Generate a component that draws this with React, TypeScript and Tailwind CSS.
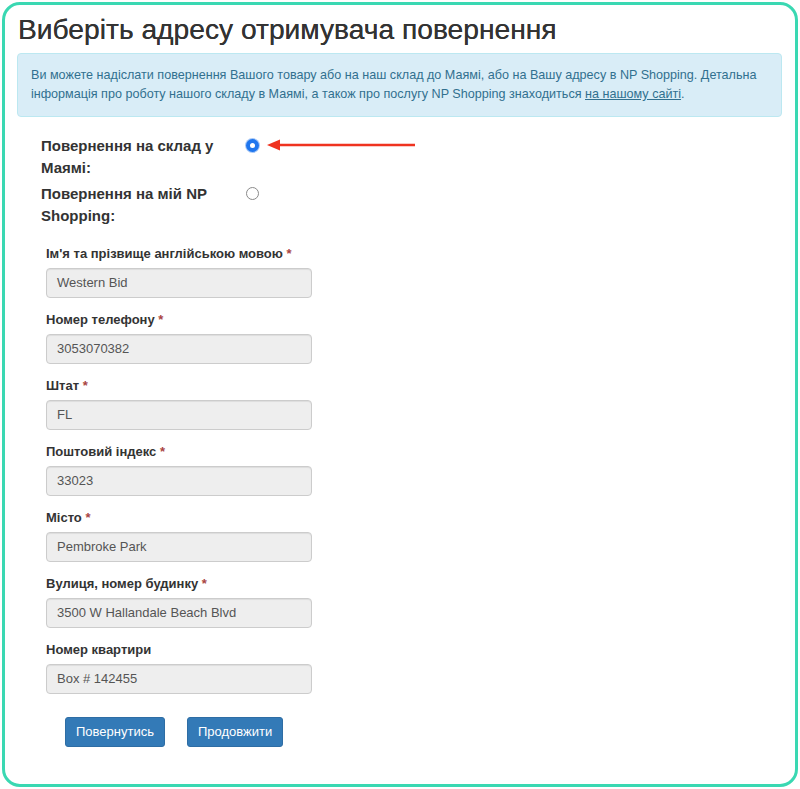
import React from 'react';

const fields = [
  { label: "Ім'я та прізвище англійською мовою", value: 'Western Bid', required: true },
  { label: 'Номер телефону', value: '3053070382', required: true },
  { label: 'Штат', value: 'FL', required: true },
  { label: 'Поштовий індекс', value: '33023', required: true },
  { label: 'Місто', value: 'Pembroke Park', required: true },
  { label: 'Вулиця, номер будинку', value: '3500 W Hallandale Beach Blvd', required: true },
  { label: 'Номер квартири', value: 'Box # 142455', required: false },
];

function Radio({ checked }: { checked?: boolean }) {
  if (checked) {
    return (
      <span className="flex h-[13px] w-[13px] items-center justify-center rounded-full bg-[#1f76ee] ring-1 ring-[#a9c9f7]">
        <span className="h-[5px] w-[5px] rounded-full bg-white" />
      </span>
    );
  }
  return <span className="block h-[13px] w-[13px] rounded-full border border-[#8a8a8a] bg-white" />;
}

export default function App() {
  return (
    <div className="h-[789px] w-[800px] bg-white p-[2px] font-['Liberation_Sans',Arial,sans-serif] text-[#333]">
      <div className="h-[785px] rounded-[18px] border-[3px] border-[#3ad8b2] pl-[12px] pr-[13px] pt-[4px]">
        <h1 className="pl-[1px] text-[28.2px] leading-[40px] text-[#333] [text-shadow:0_0_0.4px_#333]">
          Виберіть адресу отримувача повернення
        </h1>

        <div className="mt-[4px] rounded-[4px] border border-[#bce8f1] bg-[#d9edf7] px-[13px] py-[12px] text-[12.6px] leading-[19px] text-[#31708f]">
          <div className="whitespace-nowrap">
            Ви можете надіслати повернення Вашого товару або на наш склад до Маямі, або на Вашу адресу в NP Shopping. Детальна
          </div>
          <div className="whitespace-nowrap">
            інформація про роботу нашого складу в Маямі, а також про послугу NP Shopping знаходиться{' '}
            <a href="#" className="underline">на нашому сайті</a>.
          </div>
        </div>

        {/* Radio choice */}
        <div className="ml-[24px] mt-[18px] flex flex-col gap-[4px]">
          <div className="relative flex">
            <div className="w-[200px] text-[15px] font-bold leading-[22px]">Повернення на склад у Маямі:</div>
            <div className="ml-[5px] pt-[4px]">
              <Radio checked />
            </div>
            <svg className="absolute left-[226px] top-[3px]" width="150" height="14" viewBox="0 0 150 14">
              <line x1="10" y1="7" x2="148" y2="7" stroke="#ef3320" strokeWidth="2.5" />
              <polygon points="0,7 13,1.5 13,12.5" fill="#ef3320" />
            </svg>
          </div>
          <div className="flex">
            <div className="w-[200px] text-[15px] font-bold leading-[22px]">Повернення на мій NP Shopping:</div>
            <div className="ml-[5px] pt-[4px]">
              <Radio />
            </div>
          </div>
        </div>

        {/* Address form */}
        <div className="ml-[29px] mt-[18px] w-[266px]">
          {fields.map((f) => (
            <div key={f.label} className="mb-[13px]">
              <div className="mb-[5px] text-[13px] font-bold leading-[18px] text-[#333]">
                {f.label}
                {f.required && <span className="text-[#a94442]"> *</span>}
              </div>
              <div className="flex h-[30px] items-center rounded-[4px] border border-[#ccc] bg-[#eee] px-[10px] text-[13px] text-[#555] shadow-[inset_0_1px_1px_rgba(0,0,0,0.075)]">
                {f.value}
              </div>
            </div>
          ))}
        </div>

        <div className="ml-[48px] mt-[23px] flex gap-[22px]">
          <button className="h-[30px] rounded-[3px] border border-[#2e6da4] bg-[#337ab7] px-[10px] text-[13px] text-white">
            Повернутись
          </button>
          <button className="h-[30px] rounded-[3px] border border-[#2e6da4] bg-[#337ab7] px-[10px] text-[13px] text-white">
            Продовжити
          </button>
        </div>
      </div>
    </div>
  );
}
